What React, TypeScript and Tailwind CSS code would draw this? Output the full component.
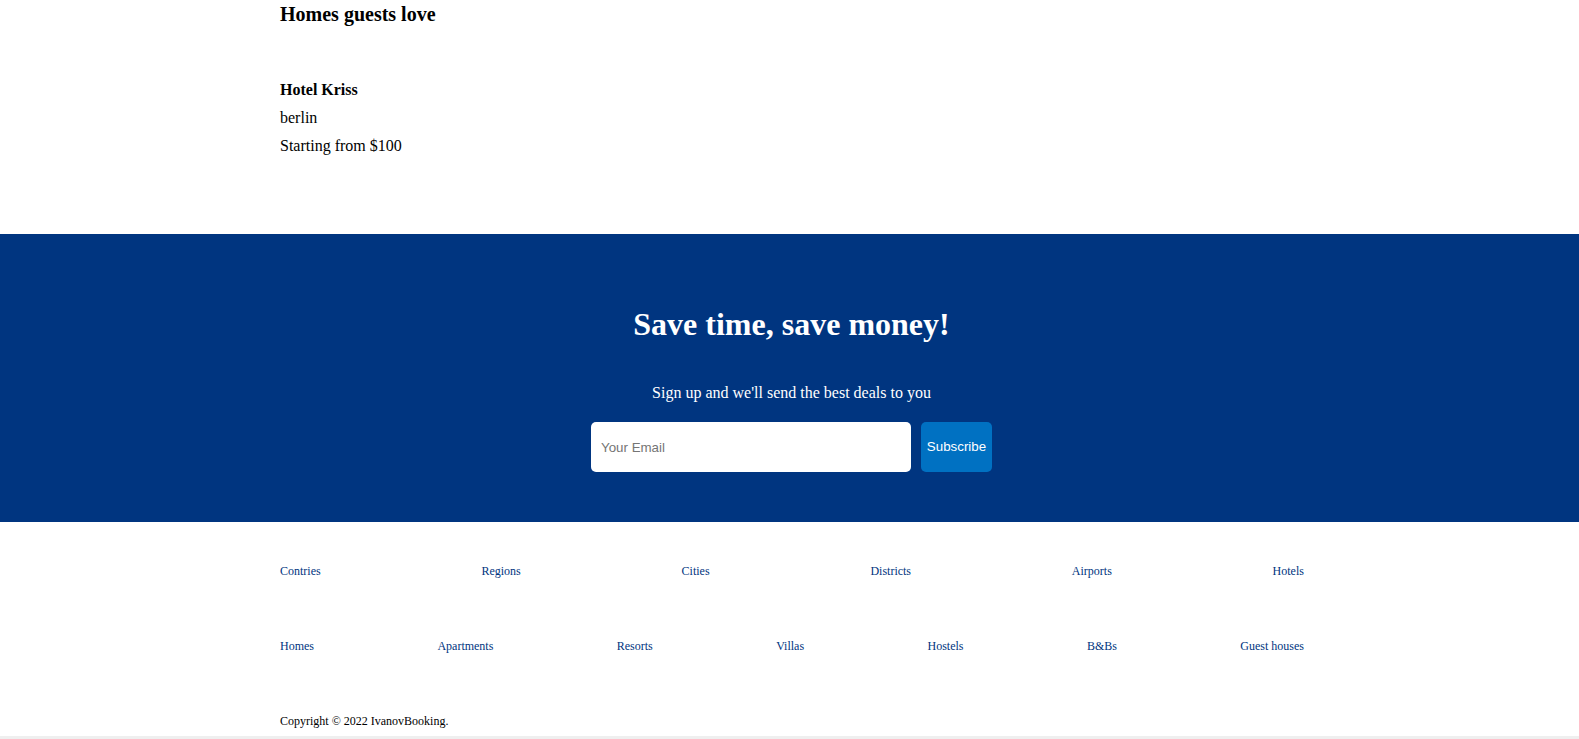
import React from "react";

const row1 = ["Contries", "Regions", "Cities", "Districts", "Airports", "Hotels"];
const row2 = ["Homes", "Apartments", "Resorts", "Villas", "Hostels", "B&Bs", "Guest houses"];

export default function App() {
  return (
    <div className="font-['Liberation_Serif','Times_New_Roman',serif] text-black bg-white w-full h-[739px] flex flex-col overflow-hidden">
      <div className="flex justify-center pl-[5px] h-[234px] shrink-0">
        <div className="w-[1024px] pt-[3px]">
          <h2 className="text-[20px] font-bold leading-[23px]">Homes guests love</h2>
          <div className="mt-[50px] text-[16px] leading-[28px]">
            <p className="font-bold">Hotel Kriss</p>
            <p>berlin</p>
            <p>Starting from $100</p>
          </div>
        </div>
      </div>

      <div className="h-[288px] shrink-0 bg-[#003580] flex flex-col items-center pl-[4px] pt-[72px] text-white">
        <h1 className="text-[32px] font-bold leading-[36px]">Save time, save money!</h1>
        <p className="mt-[42px] text-[16px] leading-[18px]">Sign up and we'll send the best deals to you</p>
        <div className="mt-[20px] flex h-[50px] gap-[10px]">
          <input
            type="text"
            placeholder="Your Email"
            className="w-[320px] h-[50px] rounded-[5px] bg-white px-[10px] font-['Liberation_Sans',Arial,sans-serif] text-[13.33px] text-black placeholder:text-[#757575] outline-none border-0"
          />
          <button className="w-[71px] h-[50px] rounded-[5px] bg-[#0071c2] text-white font-['Liberation_Sans',Arial,sans-serif] text-[13.33px]">
            Subscribe
          </button>
        </div>
      </div>

      <div className="flex justify-center pl-[5px] pt-[42px]">
        <div className="w-[1024px] text-[12px] leading-[14px]">
          <ul className="flex justify-between text-[#003580]">
            {row1.map((t) => (
              <li key={t}>{t}</li>
            ))}
          </ul>
          <ul className="mt-[61px] flex justify-between text-[#003580]">
            {row2.map((t) => (
              <li key={t}>{t}</li>
            ))}
          </ul>
          <p className="mt-[61px]">Copyright © 2022 IvanovBooking.</p>
        </div>
      </div>

      <div className="mt-auto h-[3px] bg-[#efefef] shrink-0" />
    </div>
  );
}
